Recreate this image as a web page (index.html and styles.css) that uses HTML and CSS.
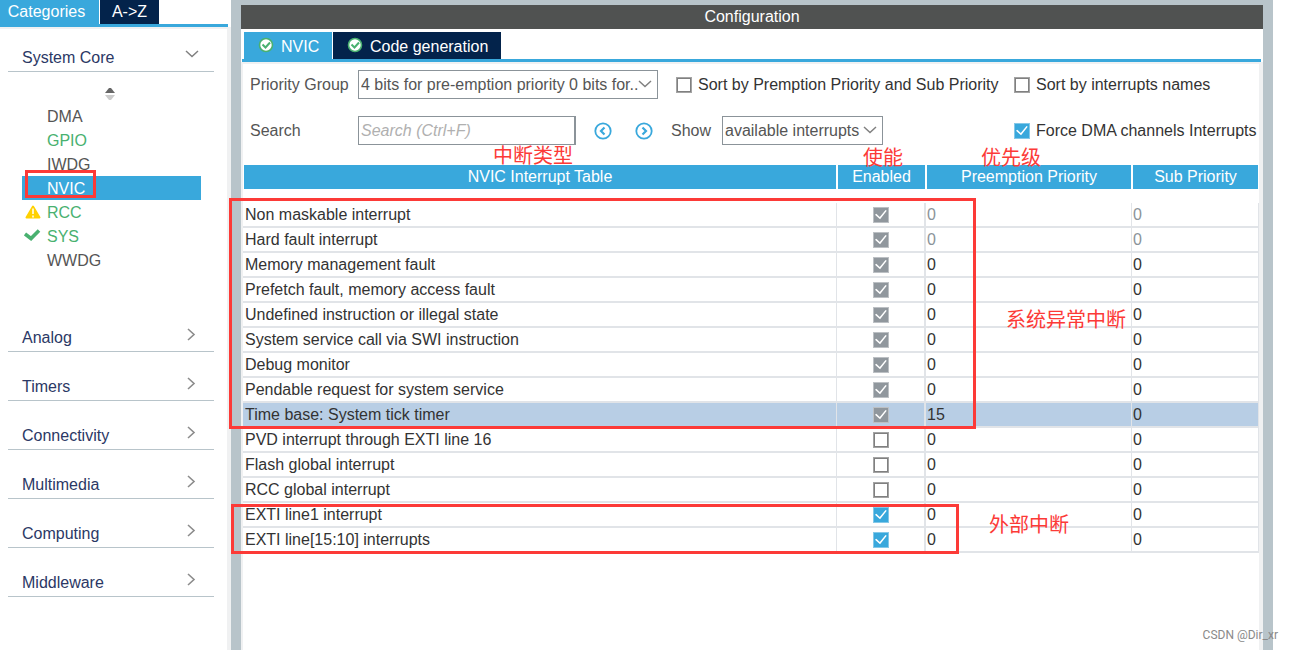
FILE: index.html
```html
<!DOCTYPE html>
<html lang="en">
<head>
<meta charset="utf-8">
<title>NVIC Configuration</title>
<link rel="stylesheet" href="styles.css">
</head>
<body>
<svg class="defs" aria-hidden="true">
  <symbol id="right" viewBox="0 0 10 13"><path d="M1 1 7 6.5 1 12" fill="none" stroke="#8c8c8c" stroke-width="1.6"/></symbol>
  <symbol id="down" viewBox="0 0 14 9"><path d="M1 1 7 6.5 13 1" fill="none" stroke="#808080" stroke-width="1.5"/></symbol>
  <symbol id="badge" viewBox="0 0 16 16"><circle cx="8" cy="8" r="6.5" fill="#fff" stroke="#49b170" stroke-width="1.6"/><path d="M4.5 7.5 7.5 10.5 12 5.5" fill="none" stroke="#49b170" stroke-width="2"/></symbol>
</svg>
<div class="app">
  <aside class="sidebar">
    <div class="side-tabs">
      <button class="side-tab active">Categories</button>
      <button class="side-tab">A-&gt;Z</button>
    </div>
    <nav class="categories">
      <button class="category first">System Core<svg class="chev-down"><use href="#down"/></svg></button>
      <div class="tree">
        <button class="sort" aria-label="Sort"><svg width="12" height="14" viewBox="0 0 12 14"><path d="M1 6 5 1H7L11 6Z" fill="#666"/><path d="M1 8H11L7 13H5Z" fill="#ccc"/></svg></button>
        <ul class="peripherals">
          <li>DMA</li>
          <li class="ok">GPIO</li>
          <li>IWDG</li>
          <li class="selected">NVIC</li>
          <li class="ok"><svg class="status" viewBox="0 0 18 16"><path d="M9 2.5 15.5 13.5H2.5Z" fill="#ffd100" stroke="#ffd100" stroke-width="2" stroke-linejoin="round"/><path d="M9 4.5V10M9 11.5V13.5" stroke="#fff" stroke-width="1.5"/></svg>RCC</li>
          <li class="ok"><svg class="status" viewBox="0 0 18 16"><path d="M1 6 7 10.5 15 2.5" fill="none" stroke="#49b170" stroke-width="3.6"/></svg>SYS</li>
          <li>WWDG</li>
        </ul>
      </div>
      <button class="category">Analog<svg class="chev-right"><use href="#right"/></svg></button>
      <button class="category">Timers<svg class="chev-right"><use href="#right"/></svg></button>
      <button class="category">Connectivity<svg class="chev-right"><use href="#right"/></svg></button>
      <button class="category">Multimedia<svg class="chev-right"><use href="#right"/></svg></button>
      <button class="category">Computing<svg class="chev-right"><use href="#right"/></svg></button>
      <button class="category">Middleware<svg class="chev-right"><use href="#right"/></svg></button>
    </nav>
  </aside>
  <main class="config">
    <h1 class="config-title">Configuration</h1>
    <div class="tabs">
      <button class="tab active"><svg class="badge"><use href="#badge"/></svg>NVIC</button>
      <button class="tab"><svg class="badge"><use href="#badge"/></svg>Code generation</button>
    </div>
    <div class="panel">
      <div class="toolbar">
        <div class="bar">
          <label class="caption" for="group">Priority Group</label>
          <span class="dropdown wide"><select id="group"><option>4 bits for pre-emption priority 0 bits for..</option></select><svg class="chev-down"><use href="#down"/></svg></span>
          <label class="check"><input type="checkbox">Sort by Premption Priority and Sub Priority</label>
          <label class="check end"><input type="checkbox">Sort by interrupts names</label>
        </div>
        <div class="bar">
          <label class="caption" for="search">Search</label>
          <input class="search" id="search" type="text" placeholder="Search (Ctrl+F)">
          <div class="steps">
            <button aria-label="Previous"><svg width="18" height="18" viewBox="0 0 18 18" fill="none" stroke="#39a8dc"><circle cx="9" cy="9" r="7.7" stroke-width="1.8"/><path d="M10.5 5.5 7 9 10.5 12.5" stroke-width="2.2"/></svg></button>
            <button aria-label="Next"><svg width="18" height="18" viewBox="0 0 18 18" fill="none" stroke="#39a8dc"><circle cx="9" cy="9" r="7.7" stroke-width="1.8"/><path d="M7.5 5.5 11 9 7.5 12.5" stroke-width="2.2"/></svg></button>
          </div>
          <label class="show" for="show">Show</label>
          <span class="dropdown"><select id="show"><option>available interrupts</option></select><svg class="chev-down"><use href="#down"/></svg></span>
          <label class="check end"><input type="checkbox" checked>Force DMA channels Interrupts</label>
        </div>
      </div>
      <table class="interrupts">
        <colgroup><col><col class="c-enabled"><col class="c-pre"><col class="c-sub"></colgroup>
        <thead><tr><th><span>NVIC Interrupt Table</span></th><th><span>Enabled</span></th><th><span>Preemption Priority</span></th><th><span>Sub Priority</span></th></tr></thead>
        <tbody>
          <tr class="locked"><td>Non maskable interrupt</td><td><input type="checkbox" aria-label="Enabled" checked disabled></td><td>0</td><td>0</td></tr>
          <tr class="locked"><td>Hard fault interrupt</td><td><input type="checkbox" aria-label="Enabled" checked disabled></td><td>0</td><td>0</td></tr>
          <tr><td>Memory management fault</td><td><input type="checkbox" aria-label="Enabled" checked disabled></td><td>0</td><td>0</td></tr>
          <tr><td>Prefetch fault, memory access fault</td><td><input type="checkbox" aria-label="Enabled" checked disabled></td><td>0</td><td>0</td></tr>
          <tr><td>Undefined instruction or illegal state</td><td><input type="checkbox" aria-label="Enabled" checked disabled></td><td>0</td><td>0</td></tr>
          <tr><td>System service call via SWI instruction</td><td><input type="checkbox" aria-label="Enabled" checked disabled></td><td>0</td><td>0</td></tr>
          <tr><td>Debug monitor</td><td><input type="checkbox" aria-label="Enabled" checked disabled></td><td>0</td><td>0</td></tr>
          <tr><td>Pendable request for system service</td><td><input type="checkbox" aria-label="Enabled" checked disabled></td><td>0</td><td>0</td></tr>
          <tr class="current"><td>Time base: System tick timer</td><td><input type="checkbox" aria-label="Enabled" checked disabled></td><td>15</td><td>0</td></tr>
          <tr><td>PVD interrupt through EXTI line 16</td><td><input type="checkbox" aria-label="Enabled"></td><td>0</td><td>0</td></tr>
          <tr><td>Flash global interrupt</td><td><input type="checkbox" aria-label="Enabled"></td><td>0</td><td>0</td></tr>
          <tr><td>RCC global interrupt</td><td><input type="checkbox" aria-label="Enabled"></td><td>0</td><td>0</td></tr>
          <tr><td>EXTI line1 interrupt</td><td><input type="checkbox" aria-label="Enabled" checked></td><td>0</td><td>0</td></tr>
          <tr><td>EXTI line[15:10] interrupts</td><td><input type="checkbox" aria-label="Enabled" checked></td><td>0</td><td>0</td></tr>
        </tbody>
      </table>
    </div>
  </main>
  <div class="mark mark-nvic"></div>
  <div class="mark mark-system"></div>
  <div class="mark mark-external"></div>
  <span class="note note-type" lang="zh">中断类型</span>
  <span class="note note-enable" lang="zh">使能</span>
  <span class="note note-priority" lang="zh">优先级</span>
  <span class="note note-system" lang="zh">系统异常中断</span>
  <span class="note note-external" lang="zh">外部中断</span>
  <span class="watermark">CSDN @Dir_xr</span>
</div>
</body>
</html>
```

FILE: styles.css
```css
* { box-sizing: border-box; }

body {
  margin: 0;
  background: #fff;
  color: #333;
  font: 16px/20px "Liberation Sans", Arial, sans-serif;
}

button, input, select { font: inherit; color: inherit; margin: 0; }
button { border: 0; padding: 0; background: none; }
.defs { position: absolute; width: 0; height: 0; }

.app { position: relative; display: flex; min-height: 100vh; }

/* Sidebar */
.sidebar { flex: 0 0 231px; display: flex; flex-direction: column; }

.side-tabs {
  display: flex;
  gap: 1px;
  height: 27px;
  margin-right: 3px;
  border-bottom: 3px solid #39a8dc;
}
.side-tab { width: 59px; padding-bottom: 1px; background: #03234b; color: #fff; }
.side-tab.active { width: 99px; padding-right: 6px; background: #39a8dc; }

.categories {
  flex: 1;
  padding: 0 13px 0 8px;
  border-top: 2px solid #f0f1f2;
  border-right: 4px solid #f0f1f2;
}
.category {
  display: flex;
  align-items: flex-end;
  justify-content: space-between;
  width: 100%;
  height: 49px;
  padding: 0 17px 3px 14px;
  border-bottom: 1px solid #b8c4ca;
  color: #2b3865;
}
.category.first { height: 43px; padding-right: 15px; }
.chev-right { width: 10px; height: 13px; margin-bottom: 7px; }
.chev-down { width: 14px; height: 9px; }
.category .chev-down { margin-bottom: 9px; }

.tree { height: 231px; padding: 15px 0 0 14px; }
.sort { display: block; width: 12px; height: 14px; margin: 0 0 3px 82px; }
.sort svg { display: block; }
.peripherals { list-style: none; margin: 0; padding: 0; color: #555; }
.peripherals li {
  position: relative;
  width: 179px;
  padding: 1px 0 0 25px;
  line-height: 23px;
}
.peripherals .ok { color: #49b170; }
.peripherals .selected { background: #39a8dc; color: #fff; }
.status { position: absolute; left: 2px; top: 4px; width: 18px; height: 16px; }

/* Configuration */
.config {
  flex: 1;
  display: flex;
  flex-direction: column;
  margin-right: 20px;
  border: 10px solid #b8c4ca;
  border-top-width: 5px;
  border-bottom: 0;
}
.config-title {
  margin: 0;
  background: #505251;
  color: #fff;
  font-size: 16px;
  font-weight: 400;
  line-height: 24px;
  text-align: center;
}
.tabs {
  display: flex;
  gap: 1px;
  margin: 3px 2px 0 1px;
  padding-left: 2px;
  border-bottom: 3px solid #39a8dc;
}
.tab {
  display: flex;
  align-items: center;
  gap: 7px;
  width: 168px;
  height: 27px;
  padding: 2px 0 0 14px;
  background: #03234b;
  color: #fff;
}
.tab.active { width: 88px; background: #39a8dc; }
.badge { width: 16px; height: 16px; margin-top: -3px; }

.panel {
  flex: 1;
  border: solid #f0f1f2;
  border-width: 2px 4px 0 2px;
}
.toolbar {
  display: grid;
  gap: 17px;
  padding: 6px 0 20px 7px;
}
.bar { display: flex; align-items: center; height: 29px; }
.caption { width: 108px; color: #555; }
.dropdown { position: relative; width: 161px; height: 29px; color: #555; }
.dropdown.wide { width: 300px; margin-right: 18px; }
.dropdown select {
  width: 100%;
  height: 100%;
  padding: 0 0 0 2px;
  border: 1px solid #8b9399;
  border-radius: 0;
  background: #fff;
  appearance: none;
}
.dropdown .chev-down { position: absolute; right: 6px; top: 10px; pointer-events: none; }
.search {
  width: 218px;
  height: 29px;
  padding: 0 2px;
  border: 1px solid #8b9399;
  border-right-width: 2px;
  outline: 0;
}
.search::placeholder { color: #b0b0b0; font-style: italic; opacity: 1; }
.steps { display: flex; gap: 23px; margin-left: 18px; }
.steps svg { display: block; }
.show { width: 51px; margin-left: 18px; color: #555; }
.check { display: flex; align-items: center; gap: 6px; white-space: nowrap; }
.check.end { width: 245px; margin-left: auto; }

input[type="checkbox"] {
  appearance: none;
  display: grid;
  place-items: center;
  width: 16px;
  height: 16px;
  border: 1px solid #a4a4a4;
  background: #fff;
  box-shadow: inset 0 0 0 1px #808080;
}
input[type="checkbox"]:checked { border-color: #84c8e8; background: #39a8dc; box-shadow: none; }
input[type="checkbox"]:checked:disabled { border-color: #bcc0c4; background: #90979d; }
input[type="checkbox"]:checked::after {
  content: "";
  width: 12px;
  height: 10px;
  background: #fff;
  clip-path: polygon(0 52%, 11% 42%, 40% 74%, 88% 4%, 98% 12%, 42% 98%);
}

/* Interrupt table */
.interrupts {
  width: 100%;
  table-layout: fixed;
  border-spacing: 0;
}
.c-enabled { width: 89px; }
.c-pre { width: 206px; }
.c-sub { width: 127px; }
.interrupts th { padding: 0 1px 14px; font-weight: 400; }
.interrupts th span { display: block; background: #39a8dc; color: #fff; line-height: 24px; }
.interrupts td {
  height: 25px;
  padding: 0 0 0 1px;
  border-right: 1px solid #e1e4e8;
  border-bottom: 2px solid #e1e4e8;
  line-height: 22px;
}
.interrupts td:first-child { padding-left: 2px; }
.interrupts td:nth-child(2) { border-right-width: 2px; }
.interrupts td input { margin: 0 auto; }
.locked td:nth-child(n+3) { color: #8b9399; }
.current td { background: #b8cee5; }

/* Annotations drawn over the interface */
.mark { position: absolute; border: 3px solid #fc3a37; pointer-events: none; }
.mark-nvic { left: 25px; top: 170px; width: 71px; height: 28px; }
.mark-system { left: 229px; top: 198px; width: 747px; height: 231px; }
.mark-external { left: 231px; top: 504px; width: 728px; height: 50px; }
.note {
  position: absolute;
  color: #fc3a37;
  font: 20px/24px "Noto Sans CJK SC", sans-serif;
  white-space: nowrap;
}
.note-type { left: 493px; top: 143px; }
.note-enable { left: 863px; top: 145px; }
.note-priority { left: 981px; top: 145px; }
.note-system { left: 1006px; top: 307px; }
.note-external { left: 989px; top: 512px; }
.watermark {
  position: absolute;
  right: 15px;
  bottom: 7px;
  color: #8a8a8a;
  font: 12px/16px Roboto, sans-serif;
}
```
